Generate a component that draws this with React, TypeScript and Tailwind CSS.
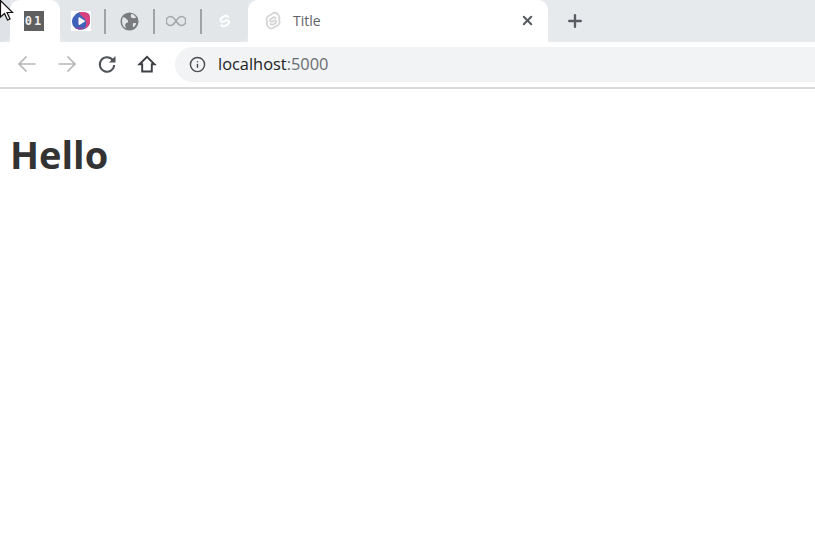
import { Info, Plus, X } from "lucide-react";

function SvelteMark({ color, className }: { color: string; className?: string }) {
  return (
    <svg viewBox="0 0 24 24" className={className} fill="none" stroke={color} strokeWidth="2.6" strokeLinecap="round" strokeLinejoin="round">
      <path d="M17.500 6.500c-1.800-1.800-3.800-1.800-5.500-.7l-3.500 2.300c-1.800 1.200-1.800 3.500.1 4.600 1.100.6 2.400.5 3.700-.2l1.400-.8c1.300-.7 2.600-.8 3.700-.2 1.900 1.100 1.900 3.400.1 4.600l-3.500 2.300c-1.700 1.100-3.700 1.100-5.500-.7" />
    </svg>
  );
}

function SvelteOutline({ className }: { className?: string }) {
  return (
    <svg viewBox="0 0 24 24" className={className} fill="none" stroke="#d6d6d6" strokeWidth="2.4" strokeLinecap="round" strokeLinejoin="round">
      <path d="M19 3.600c-2.200-2.600-5.600-3-8-1.400L6 5.400C3.500 7 2.800 10.300 4.300 12.800c-.9 2.100-.5 4.700 1 6.600 2.200 2.600 5.600 3 8 1.400l5-3.200c2.500-1.600 3.200-4.900 1.700-7.400.9-2.100.5-4.700-1-6.600z" />
      <path d="M15.500 8.200c-1-1.200-2.300-1.400-3.500-.7l-3.300 2.100c-1.300.9-1.200 2.500.1 3.100.8.400 1.700.3 2.600-.2l1.500-.9c.9-.5 1.800-.6 2.600-.2 1.300.6 1.400 2.200.1 3.100l-3.300 2.100c-1.200.7-2.500.5-3.500-.7" />
    </svg>
  );
}

function Divider() {
  return <div className="w-[2px] h-[25px] bg-[#a0a3a6]" />;
}

function PinnedIcon({ children, className }: { children: React.ReactNode; className?: string }) {
  return <div className={"flex items-center justify-center " + (className ?? "")}>{children}</div>;
}

export default function App() {
  return (
    <div className="w-[815px] h-[556px] bg-white overflow-hidden relative font-['Open_Sans',sans-serif]">
      {/* tab strip */}
      <div className="flex h-[42px] bg-[#e7eaed]">
        <div className="w-[10px] bg-[#dfe2e6] rounded-br-[8px]" />
        <div className="w-[50px] bg-white rounded-t-[10px] flex items-center justify-center pr-[3px] pb-[1px]">
          <div className="w-[20px] h-[20px] bg-[#5f5f5f] text-[#eeeeee] text-[12px] font-bold leading-[20px] text-center font-['DejaVu_Sans_Mono',monospace] tracking-[2px] pl-[1px]">
            01
          </div>
        </div>
        <div className="w-[188px] bg-[#e3e6e9] rounded-bl-[10px] rounded-br-[10px] flex items-center pl-[11px]">
          <PinnedIcon className="w-[20px] h-[20px] bg-white mr-[13px]">
            <svg viewBox="0 0 20 20" className="w-[20px] h-[20px]">
              <path d="M10 1c3 0 8 .5 8.500 3.500S19.500 13 17 15.500 10 19.500 6 18 1 13 1 10 5 1 10 1z" fill="#3f63b8" />
              <path d="M8 1.300C11 .6 17.500 .5 18.500 4.500S19.500 13 17 15.500c-1 1-2 1.700-3.200 2.300 1.400-3 2.700-7.800-1-10.800C10.500 5 9 3.500 8 1.300z" fill="#d9417f" />
              <path d="M4 17c3-1 6-1 10 .8-2.500 1-5.500 1.300-8 .2-.7-.2-1.400-.6-2-1z" fill="#8c4a9e" />
              <path d="M7.500 7.200c0-.8.700-1.100 1.300-.8l4.700 3c.6.4.6 1 0 1.400l-4.700 3c-.6.3-1.300 0-1.300-.8z" fill="#fff" />
            </svg>
          </PinnedIcon>
          <Divider />
          <PinnedIcon className="w-[20px] h-[20px] ml-[13px] mr-[14px]">
            <svg viewBox="0 0 20 20" className="w-[19px] h-[19px]">
              <circle cx="10" cy="10" r="9.500" fill="#797b7e" />
              <path d="M3 5.500c2 0 3 1 4 2s1.500 1 1.500 2.500-1.500 1-2.500 2-.5 3 .5 5l-2-1C2 14 1.500 8.500 3 5.500zM12 2c2 0 4 1.500 5 4l-3 .5c-1-.5-2.500 0-2.500-1.500s-.5-2 .5-3zM14.500 11.500c1.500 0 2.500 0 2.500 1l-2.500 3.500c-1 0-1-1-1-2s0-2.500 1-2.500z" fill="#e3e6e9" />
            </svg>
          </PinnedIcon>
          <Divider />
          <PinnedIcon className="w-[20px] h-[20px] ml-[11px] mr-[14px]">
            <svg viewBox="0 0 20 12" className="w-[20px] h-[12px]" fill="none" stroke="#a4a7aa" strokeWidth="1.6">
              <path d="M10 6C8 3 7 1.500 4.700 1.500a4.500 4.500 0 0 0 0 9C7 10.500 8 9 10 6s3-4.500 5.300-4.500a4.500 4.500 0 0 1 0 9C13 10.500 12 9 10 6z" />
            </svg>
          </PinnedIcon>
          <Divider />
          <PinnedIcon className="w-[18px] h-[18px] ml-[13px]">
            <SvelteMark color="#ffffff" className="w-[18px] h-[18px]" />
          </PinnedIcon>
        </div>
        <div className="w-[300px] bg-white rounded-t-[10px] flex items-center pl-[16px] pr-[13px] pb-[1px]">
          <SvelteOutline className="w-[18px] h-[20px]" />
          <span className="ml-[11px] text-[14px] text-[#5f6368] font-['Open_Sans',sans-serif] flex-1">Title</span>
          <X className="w-[15px] h-[15px] text-[#55585c]" strokeWidth={3} />
        </div>
        <div className="flex items-center pl-[17px] pb-[1px]">
          <Plus className="w-[20px] h-[20px] text-[#5a5d61]" strokeWidth={2.8} />
        </div>
      </div>

      {/* toolbar */}
      <div className="flex items-center h-[47px] border-b-2 border-[#dadada] pb-[1px]">
        <div className="flex items-center pl-[17px] gap-[20px]">
          <svg viewBox="0 0 20 20" className="w-[20px] h-[20px]" fill="none" stroke="#b4b6b9" strokeWidth="1.7">
            <path d="M18.500 10H2.500M9.500 2.500 2 10l7.500 7.500" />
          </svg>
          <svg viewBox="0 0 20 20" className="w-[20px] h-[20px]" fill="none" stroke="#b4b6b9" strokeWidth="1.7">
            <path d="M1.500 10h16M10.500 2.500 18 10l-7.500 7.500" />
          </svg>
          <svg viewBox="0 0 20 20" className="w-[20px] h-[20px]" fill="none">
            <path d="M15.800 6.200A7.200 7.200 0 1 0 17.200 11" stroke="#505357" strokeWidth="2" />
            <path d="M18.500 2v6.500H12z" fill="#505357" />
          </svg>
          <svg viewBox="0 0 20 20" className="w-[20px] h-[20px]" fill="none" stroke="#3c3f43" strokeWidth="1.9" strokeLinejoin="miter">
            <path d="M2.500 10.200 10 2.800l7.500 7.400h-2.700v7.300H5.200v-7.300z" />
          </svg>
        </div>
        <div className="flex items-center ml-[18px] flex-1 h-[35px] bg-[#f1f3f4] rounded-l-[18px] pl-[14px]">
          <Info className="w-[17px] h-[17px] text-[#4a4d51]" strokeWidth={2} />
          <span className="ml-[12px] text-[16.4px] text-[#222] font-['Open_Sans',sans-serif]">
            localhost<span className="text-[#6a6d71]">:5000</span>
          </span>
        </div>
      </div>

      {/* page */}
      <h1 className="mt-[39px] ml-[10px] text-[38px] leading-[52px] font-bold text-[#333333] font-['Open_Sans',sans-serif]">
        Hello
      </h1>

      {/* mouse cursor */}
      <svg viewBox="0 0 16 24" className="absolute left-0 top-0 w-[16px] h-[24px]">
        <path d="M0.500 0.500V17l4-3.500 3 6.500 2.500-1-3-6.500h5.500z" fill="#fff" stroke="#111" strokeWidth="1.2" />
      </svg>
    </div>
  );
}
